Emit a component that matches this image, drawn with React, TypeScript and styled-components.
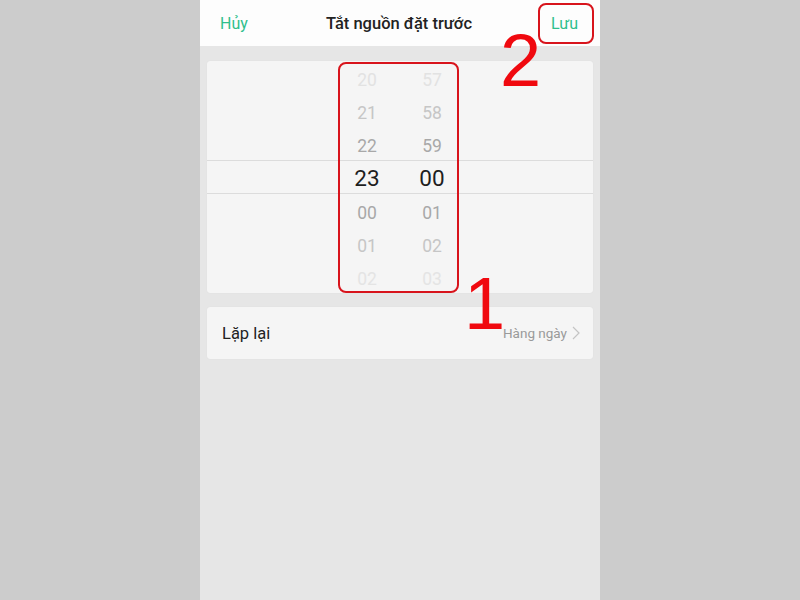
import styled, { createGlobalStyle } from "styled-components";

const GlobalStyle = createGlobalStyle`
  html, body {
    margin: 0;
    padding: 0;
    background: #cccccc;
    font-family: Roboto, "Noto Sans", "Liberation Sans", sans-serif;
  }
`;

const Stage = styled.div`
  width: 800px;
  height: 600px;
  display: flex;
  justify-content: center;
  overflow: hidden;
`;

const Phone = styled.div`
  position: relative;
  width: 400px;
  height: 600px;
  background: #e6e6e6;
  display: flex;
  flex-direction: column;
`;

const Header = styled.div`
  height: 46px;
  background: #fdfdfd;
  display: flex;
  align-items: center;
  justify-content: space-between;
  padding: 0 22px 0 20px;
  box-sizing: border-box;
`;

const HeaderButton = styled.span<{ $align: "left" | "right" }>`
  color: #2fbf8c;
  font-size: 16px;
  width: 40px;
  text-align: ${(p) => p.$align};
`;

const Title = styled.span`
  color: #222;
  font-size: 16.5px;
  font-weight: 500;
`;

const Content = styled.div`
  padding: 15px 7px 0;
  display: flex;
  flex-direction: column;
  gap: 14px;
`;

const Card = styled.div`
  background: #f5f5f5;
  border-radius: 3px;
  box-shadow: 0 0 1px rgba(0, 0, 0, 0.08);
`;

const PickerCard = styled(Card)`
  height: 232px;
  display: flex;
  flex-direction: column;
`;

const PickerRow = styled.div<{ $selected?: boolean }>`
  height: 33px;
  display: flex;
  justify-content: center;
  align-items: center;
  gap: 15px;
  padding-right: 1px;
  border-top: ${(p) => (p.$selected ? "1px solid #dcdcdc" : "none")};
  border-bottom: ${(p) => (p.$selected ? "1px solid #dcdcdc" : "none")};
`;

const Digit = styled.span<{ $color: string; $big?: boolean }>`
  width: 50px;
  text-align: center;
  color: ${(p) => p.$color};
  font-size: ${(p) => (p.$big ? "22.5px" : "17.5px")};
  padding-top: ${(p) => (p.$big ? "1px" : "5px")};
`;

const RepeatCard = styled(Card)`
  height: 52px;
  display: flex;
  align-items: center;
  justify-content: space-between;
  padding: 0 13px 0 15px;
`;

const RepeatLabel = styled.span`
  font-size: 16.5px;
  color: #222;
`;

const RepeatValue = styled.span`
  display: flex;
  align-items: center;
  gap: 5px;
  font-size: 13.5px;
  color: #9a9a9a;
`;

const Outline = styled.div`
  position: absolute;
  border: 2px solid #d8141c;
  border-radius: 8px;
  box-sizing: border-box;
`;

const BigNumber = styled.span`
  position: absolute;
  color: #f0090f;
  font-family: "Liberation Sans", Arial, sans-serif;
  font-size: 74px;
  line-height: 1;
`;

const rows = [
  { h: "20", m: "57", color: "#e2e2e2" },
  { h: "21", m: "58", color: "#c6c6c6" },
  { h: "22", m: "59", color: "#a8a8a8" },
  { h: "23", m: "00", color: "#1e1e1e", selected: true },
  { h: "00", m: "01", color: "#a8a8a8" },
  { h: "01", m: "02", color: "#c6c6c6" },
  { h: "02", m: "03", color: "#e4e4e4" },
];

export default function App() {
  return (
    <>
      <GlobalStyle />
      <Stage>
        <Phone>
          <Header>
            <HeaderButton $align="left">Hủy</HeaderButton>
            <Title>Tắt nguồn đặt trước</Title>
            <HeaderButton $align="right">Lưu</HeaderButton>
          </Header>
          <Content>
            <PickerCard>
              {rows.map((r) => (
                <PickerRow key={r.h + r.m} $selected={r.selected}>
                  <Digit $color={r.color} $big={r.selected}>
                    {r.h}
                  </Digit>
                  <Digit $color={r.color} $big={r.selected}>
                    {r.m}
                  </Digit>
                </PickerRow>
              ))}
            </PickerCard>
            <RepeatCard>
              <RepeatLabel>Lặp lại</RepeatLabel>
              <RepeatValue>
                Hàng ngày
                <svg width="8" height="14" viewBox="0 0 8 14">
                  <path
                    d="M1 1l6 6-6 6"
                    fill="none"
                    stroke="#c4c4c4"
                    strokeWidth="1.2"
                  />
                </svg>
              </RepeatValue>
            </RepeatCard>
          </Content>

          <Outline style={{ left: 138, top: 62, width: 121, height: 231 }} />
          <Outline style={{ left: 338, top: 3, width: 56, height: 41 }} />
          <BigNumber style={{ left: 264, top: 267 }}>1</BigNumber>
          <BigNumber style={{ left: 300, top: 24 }}>2</BigNumber>
        </Phone>
      </Stage>
    </>
  );
}
